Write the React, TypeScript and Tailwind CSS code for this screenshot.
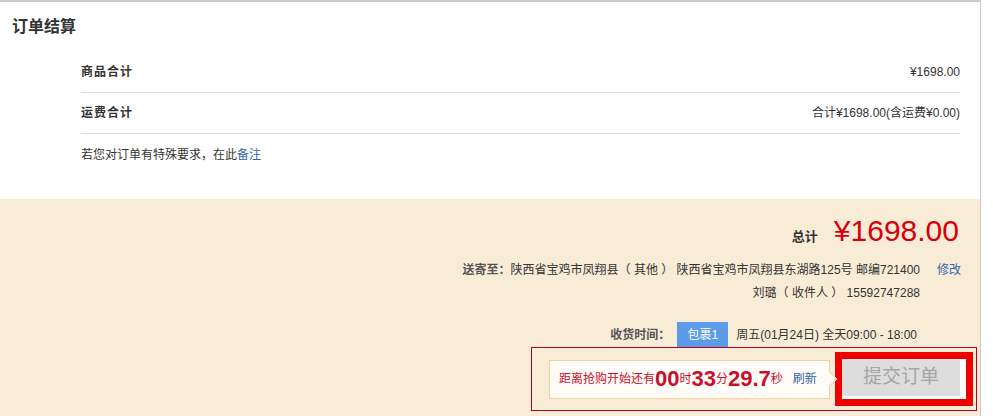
const font = "font-['Liberation_Sans','Noto_Sans_CJK_SC',sans-serif]";

const SummaryRow = ({ label, value }: { label: string; value: string }) => (
  <div className="flex h-[41px] items-center justify-between border-b border-[#dddddd]">
    <span className="text-[12px] font-bold tracking-[1px] text-[#333]">{label}</span>
    <span className="text-[12px] text-[#333]">{value}</span>
  </div>
);

const Countdown = () => (
  <div className="relative flex h-[39px] w-[281px] shrink-0 items-center border border-[#efd3a3] bg-[#fffbf6] pl-[9px] whitespace-nowrap text-[#c8102e]">
    <span className="text-[12px]">距离抢购开始还有</span>
    <span className="text-[22px] leading-none font-bold">00</span>
    <span className="text-[12px]">时</span>
    <span className="text-[22px] leading-none font-bold">33</span>
    <span className="text-[12px]">分</span>
    <span className="text-[22px] leading-none font-bold">29.7</span>
    <span className="text-[12px]">秒</span>
    <a className="ml-[10px] cursor-pointer text-[12px] text-[#3366aa]">刷新</a>
    <span className="absolute top-1/2 right-[-6px] h-[11px] w-[11px] -translate-y-1/2 rotate-45 border-t border-r border-[#efd3a3] bg-[#fffbf6]" />
  </div>
);

export default function App() {
  return (
    <div className={`${font} w-[993px] bg-white`}>
      <div className="w-[981px] border-t-2 border-r border-[#cccccc]">
        {/* top: order summary */}
        <div className="h-[197px] bg-white">
          <h2 className="pt-[13px] pl-[12px] text-[16px] leading-[24px] font-bold text-[#333]">
            订单结算
          </h2>
          <div className="mt-[13px] mr-[20px] ml-[81px]">
            <SummaryRow label="商品合计" value="¥1698.00" />
            <SummaryRow label="运费合计" value="合计¥1698.00(含运费¥0.00)" />
            <div className="flex h-[41px] items-center text-[12px] text-[#333]">
              若您对订单有特殊要求，在此
              <a className="cursor-pointer text-[#3366aa]">备注</a>
            </div>
          </div>
        </div>

        {/* bottom: total, address, submit */}
        <div className="h-[217px] bg-[#f9ecd7] pt-[14px]">
          <div className="flex items-baseline justify-end pr-[21px]">
            <span className="mr-[16px] text-[13px] font-bold text-[#333]">总计</span>
            <span className="text-[30px] leading-[36px] text-[#d6000c]">¥1698.00</span>
          </div>

          <div className="mt-[10px] flex justify-end text-[12px] leading-[23px]">
            <div className="flex flex-col items-end">
              <div className="text-[#333]">
                <span className="font-bold text-[#555]">送寄至：</span>
                陕西省宝鸡市凤翔县（ 其他 ） 陕西省宝鸡市凤翔县东湖路125号 邮编721400
              </div>
              <div className="text-[#333]">刘璐（ 收件人 ） 15592747288</div>
            </div>
            <div className="w-[60px] pl-[17px]">
              <a className="cursor-pointer text-[#3366aa]">修改</a>
            </div>
          </div>

          <div className="mt-[17px] flex items-center justify-end pr-[63px] text-[12px]">
            <span className="font-bold text-[#555]">收货时间：</span>
            <span className="ml-[7px] flex h-[25px] w-[51px] items-center justify-center bg-[#5b9be8] text-white">
              包裹1
            </span>
            <span className="ml-[8px] text-[#333]">周五(01月24日) 全天09:00 - 18:00</span>
          </div>

          <div className="mr-[3px] ml-auto flex h-[64px] w-[446px] items-center border border-[#b8001c] pl-[17px]">
            <Countdown />
            <div className="ml-[5px] flex h-[54px] w-[138px] shrink-0 border-[7px] border-[#ee0000] bg-white">
              <button className="h-[37px] w-[118px] bg-[#dddddd] text-[19px] text-[#a5a5a5]">
                提交订单
              </button>
            </div>
          </div>
        </div>
      </div>
    </div>
  );
}
